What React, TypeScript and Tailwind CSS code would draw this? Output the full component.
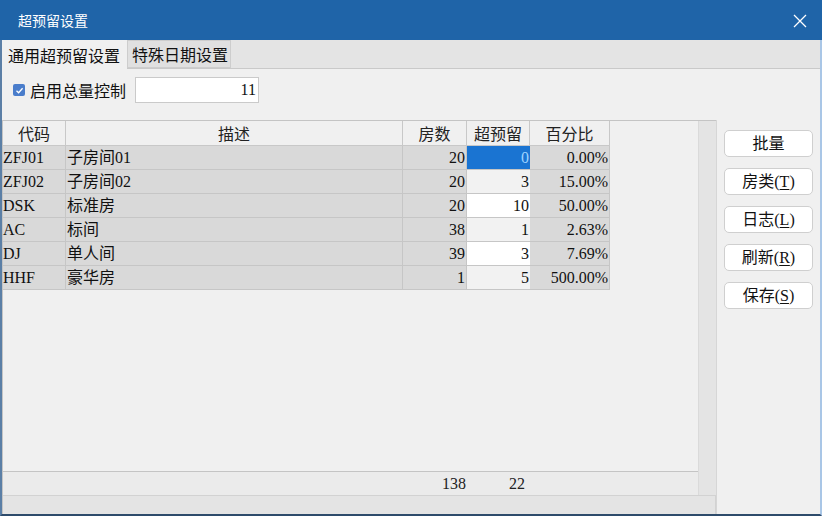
import React from 'react';

// --- DATA ---
interface RoomRow {
    code: string;
    desc: string;
    rooms: number;
    over: number;
    pct: string;
}

const rows: RoomRow[] = [
    { code: 'ZFJ01', desc: '子房间01', rooms: 20, over: 0, pct: '0.00%' },
    { code: 'ZFJ02', desc: '子房间02', rooms: 20, over: 3, pct: '15.00%' },
    { code: 'DSK', desc: '标准房', rooms: 20, over: 10, pct: '50.00%' },
    { code: 'AC', desc: '标间', rooms: 38, over: 1, pct: '2.63%' },
    { code: 'DJ', desc: '单人间', rooms: 39, over: 3, pct: '7.69%' },
    { code: 'HHF', desc: '豪华房', rooms: 1, over: 5, pct: '500.00%' },
];

const cjk = { fontFamily: '"Noto Sans CJK SC", "Liberation Sans", sans-serif' };
const mixed = { fontFamily: '"Liberation Serif", "Noto Sans CJK SC", serif' };

const SideButton: React.FC<{ label: string; hot?: string }> = ({ label, hot }) => (
    <button
        type="button"
        className="w-[89px] h-[27px] rounded-[5px] border border-[#cfcfcf] bg-white flex items-center justify-center text-[16px] leading-none text-[#111]"
        style={mixed}
    >
        <span>{label}</span>
        {hot && (
            <span>
                (<span className="underline underline-offset-2">{hot}</span>)
            </span>
        )}
    </button>
);

export default function App() {
    return (
        <div className="w-[822px] h-[516px] flex flex-col bg-[#f0f0f0] overflow-hidden">
            {/* title bar */}
            <div className="h-[40px] bg-[#1f64a8] flex items-center justify-between pl-[18px] pr-[15px] shrink-0">
                <span className="text-white text-[14px] leading-none" style={cjk}>超预留设置</span>
                <svg width="14" height="14" viewBox="0 0 14 14" className="mt-[1px]">
                    <path d="M1 1 L13 13 M13 1 L1 13" stroke="#fff" strokeWidth="1.3" />
                </svg>
            </div>

            <div className="flex-1 flex border-l-2 border-l-[#5b7fa6] border-r-2 border-r-[#a9c6e6] border-b-2 border-b-[#2e4b6b] min-h-0">
                <div className="flex-1 flex flex-col min-w-0">
                    {/* tabs */}
                    <div className="h-[29px] flex bg-[#e4e4e4] border-b border-[#c9c9c9] shrink-0">
                        <div className="w-[125px] h-[29px] bg-[#f0f0f0] flex items-center pl-[6px] text-[16px] text-[#111]" style={cjk}>
                            通用超预留设置
                        </div>
                        <div className="w-[104px] h-[28px] bg-[#e0e0e0] border border-[#cdcdcd] flex items-center pl-[4px] text-[16px] text-[#111]" style={cjk}>
                            特殊日期设置
                        </div>
                    </div>

                    {/* total control */}
                    <div className="h-[51px] flex items-start pt-[8px] pl-[11px] shrink-0">
                        <div className="h-[26px] flex items-center">
                            <span className="w-[12px] h-[12px] rounded-[2px] bg-[#4a7dcb] flex items-center justify-center">
                                <svg width="9" height="9" viewBox="0 0 9 9">
                                    <path d="M1.5 4.8 L3.6 6.8 L7.6 2.2" stroke="#fff" strokeWidth="1.3" fill="none" />
                                </svg>
                            </span>
                            <span className="ml-[5px] text-[16px] text-[#111]" style={cjk}>启用总量控制</span>
                        </div>
                        <div className="ml-[9px] w-[124px] h-[26px] bg-white border border-[#cacaca] flex items-center justify-end pr-[2px] text-[16px] text-[#111]" style={mixed}>
                            11
                        </div>
                    </div>

                    {/* grid + buttons */}
                    <div className="flex-1 flex min-h-0">
                        <div className="w-[714px] flex flex-col border-t border-l border-[#c4c4c4]">
                            <div className="flex-1 flex min-h-0">
                                <div className="flex-1 flex flex-col">
                                    {/* header */}
                                    <div className="h-[25px] flex text-[16px] text-[#222] shrink-0" style={cjk}>
                                        <div className="w-[63px] border-r border-b border-[#c8c8c8] flex items-center justify-center">代码</div>
                                        <div className="w-[337px] border-r border-b border-[#c8c8c8] flex items-center justify-center">描述</div>
                                        <div className="w-[64px] border-r border-b border-[#c8c8c8] flex items-center justify-center">房数</div>
                                        <div className="w-[63px] border-r border-b border-[#c8c8c8] flex items-center justify-center">超预留</div>
                                        <div className="w-[80px] border-r border-b border-[#c8c8c8] flex items-center justify-center">百分比</div>
                                    </div>
                                    {rows.map((r, i) => {
                                        const overBg = i === 0 ? 'bg-[#1a74d2] text-[#9fd3ff]' : i % 2 === 1 ? 'bg-[#f2f2f2]' : 'bg-white';
                                        return (
                                            <div key={r.code} className="h-[24px] flex text-[16px] text-[#111] shrink-0" style={mixed}>
                                                <div className="w-[63px] bg-[#d9d9d9] border-r border-b border-[#c6c6c6] flex items-center">{r.code}</div>
                                                <div className="w-[337px] bg-[#d9d9d9] border-r border-b border-[#c6c6c6] flex items-center pl-[1px]">{r.desc}</div>
                                                <div className="w-[64px] bg-[#d9d9d9] border-r border-b border-[#c6c6c6] flex items-center justify-end pr-[1px]">{r.rooms}</div>
                                                <div className={`w-[63px] border-b border-[#c6c6c6] flex items-center justify-end pr-[1px] ${overBg}`}>{r.over}</div>
                                                <div className="w-[80px] bg-[#d9d9d9] border-r border-b border-[#c6c6c6] flex items-center justify-end pr-[1px]">{r.pct}</div>
                                            </div>
                                        );
                                    })}
                                    <div className="flex-1" />
                                    {/* footer totals */}
                                    <div className="h-[24px] flex border-t border-[#c4c4c4] bg-[#ebebeb] text-[16px] text-[#222] shrink-0" style={mixed}>
                                        <div className="w-[464px] flex items-center justify-end pr-[1px]">138</div>
                                        <div className="w-[63px] flex items-center justify-end pr-[5px]">22</div>
                                    </div>
                                </div>
                                {/* vertical scrollbar */}
                                <div className="w-[18px] bg-[#e4e4e4] border-l border-[#dadada]" />
                            </div>
                            {/* horizontal scrollbar */}
                            <div className="h-[19px] bg-[#e4e4e4] border-t border-r border-[#d2d2d2] shrink-0" />
                        </div>

                        <div className="flex-1 flex flex-col items-center pt-[10px] gap-[11px] border-l border-[#d6d6d6]">
                            <SideButton label="批量" />
                            <SideButton label="房类" hot="T" />
                            <SideButton label="日志" hot="L" />
                            <SideButton label="刷新" hot="R" />
                            <SideButton label="保存" hot="S" />
                        </div>
                    </div>
                </div>
            </div>
        </div>
    );
}
